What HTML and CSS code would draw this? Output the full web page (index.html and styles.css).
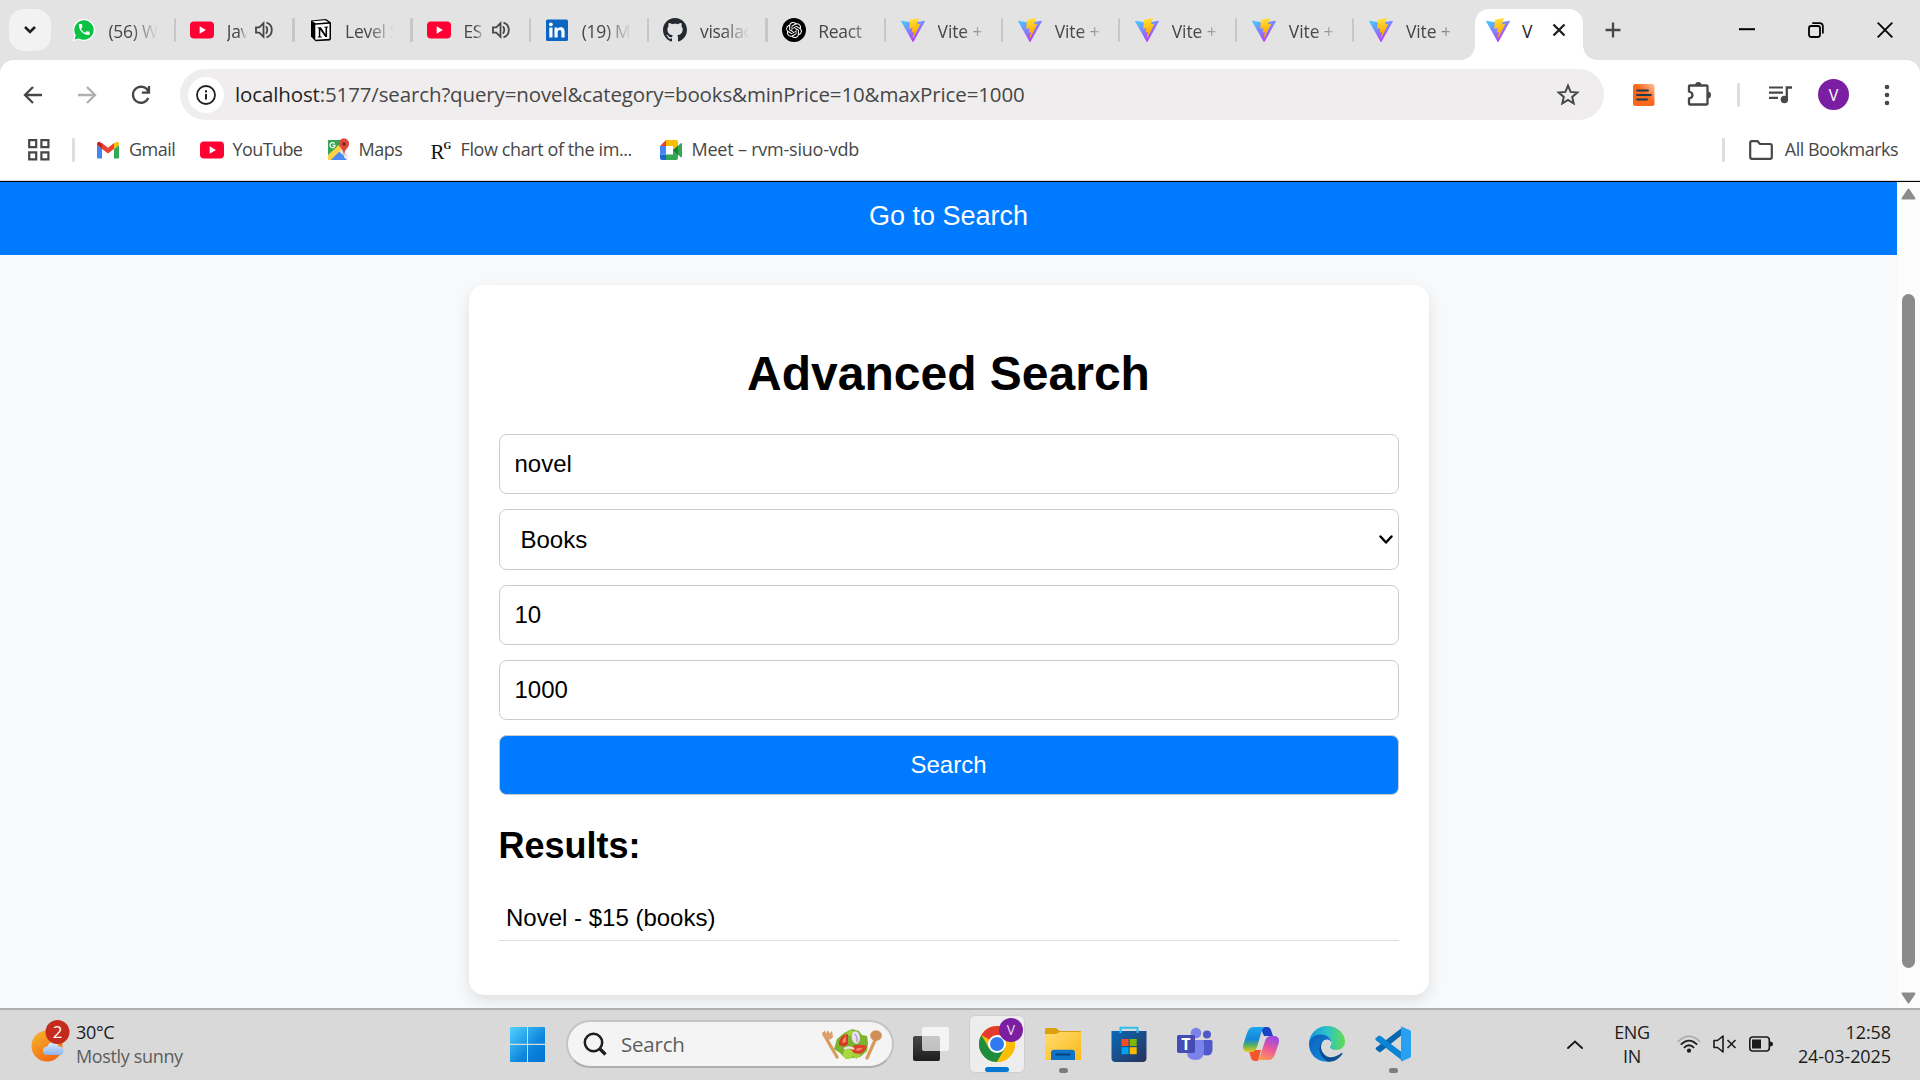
FILE: index.html
```html
<!DOCTYPE html>
<html lang="en">
<head>
<meta charset="utf-8">
<title>Advanced Search</title>
<link rel="stylesheet" href="styles.css">
</head>
<body>
<div class="tabstrip">
  <div class="tab-search"><svg width="14" height="10" viewBox="0 0 14 10"><path d="M2 2l5 5 5-5" fill="none" stroke="#1f1f1f" stroke-width="2.6"/></svg></div>
  <div class="tabs">
    <div class="tab"><svg class="fav" viewBox="0 0 24 24"><path d="M1 23.2L2.6 17.4A11 11 0 1 1 7 21.600z" fill="#fff"/><path d="M2.600 21.600L3.800 17.200A9.700 9.700 0 1 1 7.200 20.400z" fill="#0cc143"/><path transform="translate(5 4.300) scale(.6)" fill="#fff" d="M6.620 10.790c1.440 2.830 3.760 5.140 6.590 6.590l2.200-2.200c.27-.27.67-.36 1.020-.24 1.120.37 2.330.57 3.570.57.550 0 1 .45 1 1V20c0 .550-.45 1-1 1-9.390 0-17-7.610-17-17 0-.550.45-1 1-1h3.500c.550 0 1 .45 1 1 0 1.250.2 2.450.57 3.570.11.350.03.740-.25 1.020l-2.200 2.200z"/></svg><span class="title">(56) W</span><i class="sep"></i></div>
    <div class="tab audible"><svg class="fav"><use href="#yt"/></svg><span class="title">Jav</span><svg class="speaker"><use href="#speaker"/></svg><i class="sep"></i></div>
    <div class="tab"><svg class="fav" viewBox="0 0 24 24"><path d="M2 2.500L17 1l5 3.500V21l-1 1.500L6.500 23.300 2 18.500z" fill="#000"/><path d="M3.500 3.200L16.300 2.200 19.500 4.300 6.600 5.200z" fill="#fff"/><path d="M6.300 6.700L20.500 5.800V20.800L6.300 21.800z" fill="#fff"/><path d="M8.700 9.300h3.200l4.600 7V9.800l-1.300-.3V8.700l4-.2v.8l-1.100.4V19h-1.800L11.300 12v6.300l1.500.4v.7l-4.100.2v-.8l1.100-.4v-8l-1.100-.3z" fill="#000"/></svg><span class="title">Level S</span><i class="sep"></i></div>
    <div class="tab audible"><svg class="fav"><use href="#yt"/></svg><span class="title">ES</span><svg class="speaker"><use href="#speaker"/></svg><i class="sep"></i></div>
    <div class="tab"><svg class="fav" viewBox="0 0 24 24"><rect x="1" y="1.500" width="22" height="21.500" rx="1.500" fill="#0a66c2"/><path d="M4.300 9.500h3.200v10H4.300zM9.500 9.500h3v1.400c.6-1 1.700-1.600 3.200-1.600 3 0 3.900 1.800 3.900 4.700v5.500h-3.200v-5c0-1.500-.3-2.400-1.700-2.400-1.500 0-2 1-2 2.400v5H9.500z" fill="#fff"/><circle cx="5.900" cy="6.300" r="1.900" fill="#fff"/></svg><span class="title">(19) M</span><i class="sep"></i></div>
    <div class="tab"><svg class="fav" viewBox="0 0 16 16"><path fill="#24292f" d="M8 0C3.580 0 0 3.580 0 8c0 3.540 2.290 6.530 5.470 7.590.4.070.550-.17.550-.38 0-.19-.01-.82-.01-1.490-2.010.37-2.530-.49-2.690-.94-.09-.23-.48-.94-.82-1.130-.28-.15-.68-.52-.01-.53.630-.01 1.080.580 1.230.820.720 1.210 1.870.870 2.330.660.070-.52.280-.87.510-1.070-1.780-.2-3.640-.89-3.640-3.950 0-.87.310-1.590.820-2.150-.08-.2-.36-1.020.080-2.120 0 0 .670-.21 2.200.820.640-.18 1.320-.27 2-.27s1.360.090 2 .27c1.530-1.040 2.200-.82 2.200-.82.440 1.100.160 1.920.080 2.120.510.560.820 1.270.820 2.150 0 3.070-1.870 3.750-3.650 3.950.290.250.540.730.540 1.480 0 1.070-.01 1.930-.01 2.200 0 .210.150.460.550.380A8.010 8.010 0 0 0 16 8c0-4.420-3.580-8-8-8z"/></svg><span class="title">visalac</span><i class="sep"></i></div>
    <div class="tab"><svg class="fav" viewBox="0 0 24 24"><circle cx="12" cy="12" r="12"/><path transform="translate(4 4) scale(.667)" fill="#fff" d="M22.2819 9.8211a5.9847 5.9847 0 0 0-.5157-4.9108 6.0462 6.0462 0 0 0-6.5098-2.9A6.0651 6.0651 0 0 0 4.9807 4.1818a5.9847 5.9847 0 0 0-3.9977 2.9 6.0462 6.0462 0 0 0 .7427 7.0966 5.98 5.98 0 0 0 .511 4.9107 6.051 6.051 0 0 0 6.5146 2.9001A5.9847 5.9847 0 0 0 13.2599 24a6.0557 6.0557 0 0 0 5.7718-4.2058 5.9894 5.9894 0 0 0 3.9977-2.9001 6.0557 6.0557 0 0 0-.7475-7.0729zm-9.022 12.6081a4.4755 4.4755 0 0 1-2.8764-1.0408l.1419-.0804 4.7783-2.7582a.7948.7948 0 0 0 .3927-.6813v-6.7369l2.02 1.1686a.071.071 0 0 1 .038.052v5.5826a4.504 4.504 0 0 1-4.4945 4.4944zm-9.6607-4.1254a4.4708 4.4708 0 0 1-.5346-3.0137l.142.0852 4.783 2.7582a.7712.7712 0 0 0 .7806 0l5.8428-3.3685v2.3324a.0804.0804 0 0 1-.0332.0615L9.74 19.9502a4.4992 4.4992 0 0 1-6.1408-1.6464zM2.3408 7.8956a4.485 4.485 0 0 1 2.3655-1.9728V11.6a.7664.7664 0 0 0 .3879.6765l5.8144 3.3543-2.0201 1.1685a.0757.0757 0 0 1-.071 0l-4.8303-2.7865A4.504 4.504 0 0 1 2.3408 7.872zm16.5963 3.8558L13.1038 8.364 15.1192 7.2a.0757.0757 0 0 1 .071 0l4.8303 2.7913a4.4944 4.4944 0 0 1-.6765 8.1042v-5.6772a.79.79 0 0 0-.407-.667zm2.0107-3.0231l-.142-.0852-4.7735-2.7818a.7759.7759 0 0 0-.7854 0L9.409 9.2297V6.8974a.0662.0662 0 0 1 .0284-.0615l4.8303-2.7866a4.4992 4.4992 0 0 1 6.6802 4.66zM8.3065 12.863l-2.02-1.1638a.0804.0804 0 0 1-.038-.0567V6.0742a4.4992 4.4992 0 0 1 7.3757-3.4537l-.142.0805L8.704 5.459a.7948.7948 0 0 0-.3927.6813zm1.0976-2.3654l2.602-1.4998 2.6069 1.4998v2.9994l-2.5974 1.4997-2.6067-1.4997Z"/></svg><span class="title react">React</span><i class="sep"></i></div>
    <div class="tab narrow"><svg class="fav"><use href="#vite"/></svg><span class="title">Vite +</span><i class="sep"></i></div>
    <div class="tab narrow"><svg class="fav"><use href="#vite"/></svg><span class="title">Vite +</span><i class="sep"></i></div>
    <div class="tab narrow"><svg class="fav"><use href="#vite"/></svg><span class="title">Vite +</span><i class="sep"></i></div>
    <div class="tab narrow"><svg class="fav"><use href="#vite"/></svg><span class="title">Vite +</span><i class="sep"></i></div>
    <div class="tab narrow"><svg class="fav"><use href="#vite"/></svg><span class="title">Vite +</span></div>
    <div class="tab active"><svg class="fav"><use href="#vite"/></svg><span class="title">V</span><svg width="14" height="14" viewBox="0 0 14 14"><path d="M1.500 1.500l11 11M12.500 1.500l-11 11" stroke="#1f1f1f" stroke-width="2.300"/></svg></div>
    <svg class="newtab" width="16" height="16" viewBox="0 0 16 16"><path d="M8 .5v15M.5 8h15" stroke="#474747" stroke-width="2.300"/></svg>
  </div>
  <div class="controls">
    <span><svg width="16" height="16" viewBox="0 0 16 16"><path d="M0 7.200h16" stroke="#000" stroke-width="2"/></svg></span>
    <span><svg width="16" height="16" viewBox="0 0 16 16"><rect x="1" y="4" width="11" height="11" rx="2.200" fill="none" stroke="#000" stroke-width="1.800"/><path d="M4.300 1.200H11.500Q14.900 1.200 14.900 4.600V11.500" fill="none" stroke="#000" stroke-width="1.700"/></svg></span>
    <span><svg width="16" height="16" viewBox="0 0 16 16"><path d="M.7.700l14.600 14.600M15.300.700L.7 15.300" stroke="#000" stroke-width="1.800"/></svg></span>
  </div>
</div>

<div class="chrome">
  <div class="toolbar">
    <svg class="nav" viewBox="0 0 24 24"><path d="M21 12H5M12 4l-8 8 8 8" fill="none" stroke="#474747" stroke-width="2.300"/></svg>
    <svg class="nav" viewBox="0 0 24 24"><path d="M3 12h16M12 4l8 8-8 8" fill="none" stroke="#b0b0b0" stroke-width="2.300"/></svg>
    <svg class="nav" viewBox="0 0 24 24"><path d="M19.300 15A8 8 0 1 1 19.300 8.500M12.800 9.700H20V3" fill="none" stroke="#474747" stroke-width="2.300"/></svg>
    <div class="omnibox">
      <span class="info"><svg width="20" height="20" viewBox="0 0 20 20"><circle cx="10" cy="10" r="9" fill="none" stroke="#1f1f1f" stroke-width="1.800"/><path d="M10 9v5.500M10 5.200v2.200" stroke="#1f1f1f" stroke-width="2"/></svg></span>
      <span class="url"><b>localhost</b>:5177/search?query=novel&amp;category=books&amp;minPrice=10&amp;maxPrice=1000</span>
      <svg class="star" viewBox="0 0 24 24"><path d="M12 2.700l2.600 6.200 6.700.6-5.100 4.400 1.500 6.600-5.700-3.500-5.700 3.500 1.500-6.600L2.700 9.500l6.700-.6z" fill="none" stroke="#474747" stroke-width="2"/></svg>
    </div>
    <svg class="ext" viewBox="0 0 22 22"><defs><linearGradient id="og" x1="0" y1="1" x2="1" y2="0"><stop offset=".55" stop-color="#f9681c"/><stop offset="1" stop-color="#fcc3a4"/></linearGradient></defs><rect width="21.500" height="22" rx="2.500" fill="url(#og)"/><path d="M4 6.500h11M4 11h14M4 15.500h10" stroke="#1d3c52" stroke-width="1.800" stroke-linecap="round"/></svg>
    <svg class="puzzle" viewBox="0 0 26 26"><path d="M3 4.500h16.500q1 0 1 1v17q0 1-1 1H3q-1 0-1-1V17.500q3.500-.8 3.500-3.500T2 10.500v-5q0-1 1-1z" fill="none" stroke="#474747" stroke-width="2.300"/><path d="M8 4.500a3.300 3.500 0 0 1 6.600 0zM20.500 10.600a3.500 3.400 0 0 1 0 6.800z" fill="#474747"/></svg>
    <i class="bar"></i>
    <svg class="media" viewBox="0 0 24 20"><path d="M0 2.500h14M0 7.700h14M0 12.900h9" stroke="#474747" stroke-width="2.200"/><path d="M17.800 14V2.500H23" fill="none" stroke="#474747" stroke-width="2.300"/><circle cx="15.400" cy="14.500" r="3.700" fill="#474747"/></svg>
    <span class="avatar">V</span>
    <svg class="dots" viewBox="0 0 6 22"><circle cx="3" cy="3" r="2.300"/><circle cx="3" cy="11" r="2.300"/><circle cx="3" cy="19" r="2.300"/></svg>
  </div>
  <div class="bookmarks">
    <svg class="apps" viewBox="0 0 22 22"><path d="M1.200 1.200h7v7h-7zM13.400 1.200h7v7h-7zM1.200 13.400h7v7h-7zM13.400 13.400h7v7h-7z" fill="none" stroke="#474747" stroke-width="2.200"/></svg>
    <i class="bar"></i>
    <div class="bm gmail"><svg viewBox="0 0 24 24"><path d="M1 20V7l5 4v9.500H2.500Q1 20.500 1 20z" fill="#4285f4"/><path d="M23 20V7l-5 4v9.500h3.500q1.500 0 1.500-.5z" fill="#34a853"/><path d="M1 7V6q0-2.500 2.500-2.300L6 5.500V11z" fill="#c5221f"/><path d="M23 7V6q0-2.500-2.500-2.300L18 5.500V11z" fill="#fbbc04"/><path d="M6 5l6 4.700L18 5v6l-6 4.500L6 11z" fill="#ea4335"/></svg><span>Gmail</span></div>
    <div class="bm youtube"><svg><use href="#yt"/></svg><span>YouTube</span></div>
    <div class="bm maps"><svg viewBox="0 0 24 24"><path d="M2 2h16v20H2z" fill="#34a853"/><path d="M2 22L18 6v16z" fill="#4c8bf5"/><path d="M2 17L17 3l4 4L5 22H2z" fill="#fdd247"/><path d="M5 22l8-8 8 8z" fill="#4c8bf5"/><path d="M13 13.500l2.500-2.500 6 6V21z" fill="#e4e4e4"/><path d="M18 18q-.5-6-3.500-8.500A5.200 5.200 0 1 1 23 6.200q0 2-1.500 3.500Q18.500 12 18 18z" fill="#dd4b3e"/><circle cx="18" cy="6" r="1.800" fill="#7b231e"/><path d="M8.500 5.700A2.500 2.500 0 1 0 9 7.400H6.700" fill="none" stroke="#fff" stroke-width="1.200"/></svg><span>Maps</span></div>
    <div class="bm flow"><span class="rg">R<sup>G</sup></span><span>Flow chart of the im...</span></div>
    <div class="bm meet"><svg viewBox="0 0 24 24"><path d="M1 8l6-6v6z" fill="#ea4335"/><path d="M1 8h6v8.500H1z" fill="#4285f4"/><path d="M1 16.500h6V22H3q-2 0-2-2z" fill="#1967d2"/><path d="M7 2h10q2 0 2 2v6l-5 3V8H7z" fill="#fbbc04"/><path d="M7 16.500h7V11l5 3v6q0 2-2 2H7z" fill="#34a853"/><path d="M14 12.200L21.500 5.500Q23 4.500 23 6v12.500q0 1.500-1.500.5z" fill="#34a853"/><path d="M14 12.200l5-4.500v9z" fill="#188038"/></svg><span>Meet – rvm-siuo-vdb</span></div>
    <i class="bar last"></i>
    <div class="bm all"><svg viewBox="0 0 24 24"><path d="M1.200 19V5q0-1.800 1.800-1.800h5.500L11 6h10q1.800 0 1.800 1.800V19q0 1.800-1.800 1.800H3Q1.200 20.800 1.200 19z" fill="none" stroke="#474747" stroke-width="2.200"/></svg><span>All Bookmarks</span></div>
  </div>
</div>

<div class="viewport">
  <main class="page">
    <header class="site-header"><a>Go to Search</a></header>
    <section class="card">
      <h1>Advanced Search</h1>
      <form class="fields">
        <div class="field">novel</div>
        <div class="field select">Books<svg width="14" height="10" viewBox="0 0 14 10"><path d="M1.500 1.500L7 7.500l5.500-6" fill="none" stroke="#000" stroke-width="2.400" stroke-linecap="round" stroke-linejoin="round"/></svg></div>
        <div class="field">10</div>
        <div class="field">1000</div>
        <div class="field submit">Search</div>
      </form>
      <h2>Results:</h2>
      <ul class="results"><li>Novel - $15 (books)</li></ul>
    </section>
  </main>
  <div class="scrollbar">
    <svg width="15" height="12" viewBox="0 0 15 12"><path d="M7.500 1.500L13.500 10.500h-12z" fill="#8b8b8b" stroke="#8b8b8b" stroke-width="2" stroke-linejoin="round"/></svg>
    <div class="thumb"></div>
    <svg width="15" height="12" viewBox="0 0 15 12"><path d="M7.500 10.500L13.500 1.500h-12z" fill="#8b8b8b" stroke="#8b8b8b" stroke-width="2" stroke-linejoin="round"/></svg>
  </div>
</div>

<div class="taskbar">
  <div class="weather">
    <svg width="40" height="44" viewBox="0 0 40 44"><defs><linearGradient id="sun" x1="0" y1="0" x2=".6" y2="1"><stop stop-color="#f5b82e"/><stop offset="1" stop-color="#f26a12"/></linearGradient><linearGradient id="cl" x1="0" y1="0" x2="0" y2="1"><stop stop-color="#dce9fb"/><stop offset="1" stop-color="#8db4ec"/></linearGradient></defs><circle cx="17" cy="27" r="15.500" fill="url(#sun)"/><path d="M17 36a4.300 4.300 0 0 1 .3-8.600 6 6 0 0 1 11.400 0A4.300 4.300 0 0 1 30 36z" fill="url(#cl)"/><circle cx="27.500" cy="13" r="12" fill="#c42b1c"/><text x="27.500" y="19" text-anchor="middle" class="badge">2</text></svg>
    <div class="wtext"><span>30°C</span><span class="muted">Mostly sunny</span></div>
  </div>
  <div class="dock">
    <svg class="start" viewBox="0 0 35 35"><defs><linearGradient id="win" x1="0" y1="0" x2="1" y2="1"><stop stop-color="#4fd3ff"/><stop offset=".6" stop-color="#0f86de"/><stop offset="1" stop-color="#0072d0"/></linearGradient></defs><path d="M1 0h16v16.800H0V1q0-1 1-1zM18 0h16q1 0 1 1v15.800H18zM0 18h17v17H1q-1 0-1-1zM18 18h17v16q0 1-1 1H18z" fill="url(#win)"/></svg>
    <div class="tsearch">
      <svg width="24" height="24" viewBox="0 0 24 24"><circle cx="10.500" cy="10.500" r="8.700" fill="none" stroke="#1e1e1e" stroke-width="2.500"/><path d="M17 17l5.500 5.500" stroke="#1e1e1e" stroke-width="3.200"/></svg>
      <span>Search</span>
      <svg class="salad" viewBox="0 0 62 32"><path d="M5 10l11 19M55 10L46 30" stroke="#d99a5b" stroke-width="3.200" stroke-linecap="round"/><path d="M1 5l3-2.500 1.200 3L7 2l1.500 3.500L11 3l1 6q-2 3.500-6 2.500Q1.500 9.500 1 5z" fill="#dca06a"/><ellipse cx="55" cy="7.500" rx="5.800" ry="5.300" fill="#cf9058"/><path d="M13 21l3-10 7-6 8-4 7 2 3 4 5 1 1 7-1 8-7 6-8 1-6 1-6-6z" fill="#7cb22c"/><path d="M23 7l7-5 5 2-2 4zM27 23l7-2 6 7-5 3z" fill="#a6d13a"/><path d="M18 17q0-10 9-11v10q-3 4-9 1z" fill="#d93a25"/><path d="M30 22q0-6 12-5l4 1q-3 10-13 7z" fill="#dc3f28"/><path d="M21 15q1-5 4-7v6zM34 22q3-3 8-2-3 4-8 2z" fill="#f3876b"/><path d="M32 4q6-3 7 6 0 5-4 6-7-4-3-12z" fill="#eadff0"/><path d="M34 6q3 3 2 8" fill="none" stroke="#a77bb5"/><circle cx="27" cy="26" r="5" fill="#aad83f"/><path d="M23 21q5-3 10 0" stroke="#f2dfe0" stroke-width="2.500" fill="none"/></svg>
    </div>
    <svg class="tview" viewBox="0 0 36 35"><defs><linearGradient id="tv" x1="0" y1="0" x2="0" y2="1"><stop stop-color="#484848"/><stop offset="1" stop-color="#1d1d1d"/></linearGradient></defs><rect y="9" width="27" height="25" rx="2" fill="url(#tv)"/><rect x="9" width="27" height="24" rx="2" fill="#fff" opacity=".7"/></svg>
    <div class="app current"><svg viewBox="0 0 36 36"><circle cx="18" cy="18" r="18" fill="#fbbc04"/><path d="M18 18L2.400 9A18 18 0 0 1 33.600 9H18z" fill="#e33b2e"/><path d="M18 18l7.800 4.500L18 36A18 18 0 0 1 2.400 9l7.800 13.500z" fill="#1e8e3e"/><path d="M18 9h15.600A18 18 0 0 1 18 36l7.800-13.500z" fill="#fbbc04"/><circle cx="18" cy="18" r="9" fill="#fff"/><circle cx="18" cy="18" r="7" fill="#3079ee"/></svg><span class="profile">V</span><i class="run on"></i></div>
    <div class="app"><svg viewBox="0 0 36 36"><defs><linearGradient id="fo" x1="0" y1="0" x2="1" y2="1"><stop stop-color="#ffdc73"/><stop offset="1" stop-color="#fbb917"/></linearGradient></defs><path d="M0 3.500Q0 2 1.500 2H10q1.500 0 2.500 1.200L14.500 5H35q1 0 1 1v8H0z" fill="#dd9f0a"/><path d="M0 8h10.500q1.500 0 2.500-1t2.500-1H35q1 0 1 1v26q0 1-1 1H1q-1 0-1-1z" fill="url(#fo)"/><path d="M6 34V27q0-3.300 3.300-3.300H27q3 0 3 3V34z" fill="#0f73c8"/><path d="M10.500 28.500h15" stroke="#08457e" stroke-width="2"/></svg><i class="run"></i></div>
    <div class="app"><svg viewBox="0 0 36 36"><defs><linearGradient id="st" x1="0" y1="0" x2="1" y2="1"><stop stop-color="#0a6ab8"/><stop offset="1" stop-color="#2a3158"/></linearGradient></defs><path d="M.5 5h35v27q0 4-4 4h-27q-4 0-4-4z" fill="url(#st)"/><path d="M9.500 7V1.800h17V7" fill="none" stroke="#30bdf0" stroke-width="2"/><path d="M10.500 13h7v7h-7z" fill="#f25022"/><path d="M18.700 13h7v7h-7z" fill="#7fba00"/><path d="M10.500 21.200h7v7h-7z" fill="#00a4ef"/><path d="M18.700 21.200h7v7h-7z" fill="#ffb900"/></svg></div>
    <div class="app"><svg viewBox="0 0 36 36"><circle cx="19" cy="7" r="5.300" fill="#7b83eb"/><circle cx="30" cy="8.500" r="4" fill="#5059c9"/><path d="M23 14h11q1.500 0 1.500 1.500v8q0 6-6 6-4 0-6.500-3z" fill="#5059c9"/><path d="M11 14h14.500q1.500 0 1.500 1.500V25q0 9-8.500 9T10 26z" fill="#7b83eb"/><rect y="9" width="18" height="18" rx="1.800" fill="#454db5"/><text x="9" y="23.500" text-anchor="middle" class="tee">T</text></svg></div>
    <div class="app"><svg viewBox="0 0 36 36"><defs><linearGradient id="c1" x1="0" y1="0" x2="0" y2="1"><stop stop-color="#1fa8ee"/><stop offset=".5" stop-color="#1387d8"/><stop offset=".75" stop-color="#5fb35a"/><stop offset="1" stop-color="#f1c81c"/></linearGradient><linearGradient id="c2" x1=".3" y1="0" x2="0" y2="1"><stop stop-color="#a34be0"/><stop offset=".45" stop-color="#ee5a94"/><stop offset="1" stop-color="#ffa24e"/></linearGradient></defs><path d="M17 1h7q3 0 4 3l2 6h-9z" fill="#1b44c4"/><path d="M10 24h8l-3 11h-3q-3 0-4-3L6 25z" fill="#f4552c"/><path d="M10 1h12q-2.500 1-3.500 5L14 21q-1.500 5-6 5H5Q-1.500 26 .5 18L4 7q2-6 6-6z" fill="url(#c1)"/><path d="M26 34H14q2.500-1 3.500-5L22 15q1.500-5 6-5h3q6.500 0 4.500 8L32 28q-2 6-6 6z" fill="url(#c2)"/></svg></div>
    <div class="app"><svg viewBox="0 0 36 36"><defs><linearGradient id="e1" x1="0" y1=".5" x2="1" y2=".5"><stop stop-color="#1594d8"/><stop offset=".5" stop-color="#2cc3c8"/><stop offset="1" stop-color="#62dc50"/></linearGradient><linearGradient id="e2" x1="0" y1="0" x2=".7" y2="1"><stop stop-color="#0c5fb5"/><stop offset="1" stop-color="#1387e0"/></linearGradient></defs><path d="M0 18A18 18 0 0 1 18 0C29 0 36 8 36 15.500c0 5.500-4 8.500-9 8.500-4 0-6-1.500-6-3 0-1 1.500-1.700 1.500-4.500C22.500 12 18 9 12 9 6 9 1 13 0 18z" fill="url(#e1)"/><path d="M0 18c0-5 5-9.500 11.500-9.500 6.500 0 10.500 3.500 11 8-1-2-2.500-3-4.500-3-4 0-6.500 4-6 9 .5 6 5 11 10.500 12.500C10 38.500 0 29 0 18z" fill="url(#e2)"/><path d="M14 15c-2.500 3-3 8 .5 12.500S24 33 32.500 27c1-.7 1.300.3.800 1C28 36 20 37 17 34.500 10 30 8 20 14 15z" fill="#0c4f93"/></svg></div>
    <div class="app"><svg viewBox="0 0 36 36"><path d="M1 12.500l3-2.500q1-.6 2 .2L28 28v7L1.200 14.500Q0 13.500 1 12.500z" fill="#0a7fd0"/><path d="M1 23.500l3 2.500q1 .6 2-.2L28 8V1L1.200 21.500Q0 22.500 1 23.500z" fill="#0668ae"/><path d="M0 12.700l4-3.200L28 27v8z" fill="#0d84d4"/><path d="M26.500.500L35 4.200q1 .6 1 1.800V30q0 1.200-1 1.800L26.500 35.500 26 35V1z" fill="#29a0f0"/></svg><i class="run"></i></div>
  </div>
  <div class="tray">
    <svg class="chev" viewBox="0 0 16 9"><path d="M1 8l7-6.500L15 8" fill="none" stroke="#1b1b1b" stroke-width="1.900" stroke-linecap="round"/></svg>
    <div class="lang"><span>ENG</span><span>IN</span></div>
    <svg class="wifi" viewBox="0 0 24 18"><path d="M.8 7q11.200-11.500 22.400 0" fill="none" stroke="#a9a9a9" stroke-width="1.500"/><path d="M3.800 9.700q8.200-8.200 16.400 0M6.900 12.800q5.100-5 10.200 0" fill="none" stroke="#1b1b1b" stroke-width="1.800"/><circle cx="12" cy="15.700" r="2.100" fill="#1b1b1b"/></svg>
    <svg class="vol" viewBox="0 0 24 18"><path d="M1 5.500h3.500L10 1v16L4.500 12.500H1z" fill="none" stroke="#1b1b1b" stroke-width="1.600" stroke-linejoin="round"/><path d="M14.500 5l8 8M22.500 5l-8 8" stroke="#1b1b1b" stroke-width="1.600"/></svg>
    <svg class="bat" viewBox="0 0 24 16"><rect x=".8" y="1" width="19.500" height="14" rx="3" fill="none" stroke="#1b1b1b" stroke-width="1.600"/><path d="M3 3.500h9v9H3zM21 5.500q3 0 3 2.500t-3 2.500z" fill="#1b1b1b"/></svg>
    <div class="clock"><span>12:58</span><span>24-03-2025</span></div>
  </div>
</div>

<svg class="sprite">
  <defs>
    <linearGradient id="va" x1="0" x2=".6" y1="0" y2="1"><stop stop-color="#41d1ff"/><stop offset="1" stop-color="#bd34fe"/></linearGradient>
    <linearGradient id="vb" x1=".4" x2=".5" y1="0" y2=".8"><stop stop-color="#ffea83"/><stop offset=".1" stop-color="#ffdd35"/><stop offset="1" stop-color="#ffa800"/></linearGradient>
  </defs>
  <symbol id="vite" viewBox="0 0 256 257"><path fill="url(#va)" d="M255.153 37.938L134.897 252.976c-2.483 4.440-8.862 4.466-11.382.048L.875 37.958c-2.746-4.814 1.371-10.646 6.827-9.670l120.385 21.517a6.537 6.537 0 0 0 2.322-.004l117.867-21.483c5.438-.991 9.574 4.796 6.877 9.620Z"/><path fill="url(#vb)" d="M185.432.063L96.440 17.501a3.268 3.268 0 0 0-2.634 3.014l-5.474 92.456a3.268 3.268 0 0 0 3.997 3.378l24.777-5.718c2.318-.535 4.413 1.507 3.936 3.838l-7.361 36.047c-.495 2.426 1.782 4.500 4.151 3.780l15.304-4.649c2.372-.72 4.652 1.360 4.150 3.788l-11.698 56.621c-.732 3.542 3.979 5.473 5.943 2.437l1.313-2.028l72.516-144.720c1.215-2.423-.88-5.186-3.540-4.672l-25.505 4.922c-2.396.462-4.435-1.770-3.759-4.114l16.646-57.705c.677-2.350-1.370-4.583-3.769-4.113Z"/></symbol>
  <symbol id="yt" viewBox="0 0 24 24"><rect y="3.500" width="24" height="17" rx="4" fill="#ff0033"/><path d="M9.700 8.300l6.200 3.700-6.200 3.700z" fill="#fff"/></symbol>
  <symbol id="speaker" viewBox="0 0 18 18"><path d="M1 6.300h3.300L8.500 2.200v13.600L4.300 11.700H1z" fill="none" stroke="#474747" stroke-width="1.800"/><path d="M11 5.300q2.500 3.700 0 7.400M11.500 1.700q5.300 1.600 5.300 7.300t-5.300 7.300" fill="none" stroke="#474747" stroke-width="1.800"/></symbol>
</svg>
</body>
</html>
```
FILE: styles.css
```css
* { box-sizing: border-box; }
body { margin: 0; width: 1920px; height: 1080px; overflow: hidden; display: flex; flex-direction: column; background: #fff; font-family: "Open Sans", "Noto Sans", sans-serif; font-size: 18px; color: #474747; white-space: nowrap; }
svg { display: block; flex: none; }
i { flex: none; }
.sprite { width: 0; height: 0; }

/* tab strip */
.tabstrip { height: 60px; flex: none; display: flex; background: #e3e3e3; padding-left: 9px; }
.tab-search { width: 42px; height: 42px; margin-top: 9px; border-radius: 15px; background: #f2f2f2; display: flex; align-items: center; justify-content: center; }
.tabs { display: flex; margin-left: 7px; flex: 1; align-items: center; }
.tab { width: 118.3px; height: 100%; display: flex; align-items: center; padding-left: 14px; }
.tab.narrow { width: 117.1px; padding-left: 15px; }
.fav { width: 24px; height: 24px; }
.title { flex: 1; min-width: 0; overflow: hidden; margin: 0 16px 0 12.5px; font-size: 17.5px; letter-spacing: -.3px; padding-top: 1px; -webkit-mask-image: linear-gradient(90deg, #000 calc(100% - 26px), transparent); mask-image: linear-gradient(90deg, #000 calc(100% - 26px), transparent); }
.narrow .title { margin-right: 12px; letter-spacing: -.1px; }
.react { -webkit-mask-image: linear-gradient(90deg, #000 55%, #0009 88%); mask-image: linear-gradient(90deg, #000 55%, #0009 88%); }
.audible .title { margin-right: 8px; -webkit-mask-image: linear-gradient(90deg, #000 60%, transparent); mask-image: linear-gradient(90deg, #000 60%, transparent); }
.speaker { width: 18px; height: 18px; margin-right: 19px; }
.sep { width: 2.5px; height: 24px; background: #c7c7c7; border-radius: 1px; }
.tab.active { position: relative; width: 108px; height: 51px; margin: 9px 0 0 3px; padding: 0 17px 9px 11px; background: #fff; border-radius: 14px 14px 0 0; color: #1f1f1f; }
.tab.active::before, .tab.active::after { content: ""; position: absolute; bottom: 0; width: 14px; height: 14px; }
.tab.active::before { left: -14px; background: radial-gradient(circle at 0 0, transparent 13.5px, #fff 14px); }
.tab.active::after { right: -14px; background: radial-gradient(circle at 100% 0, transparent 13.5px, #fff 14px); }
.active .title { -webkit-mask-image: none; mask-image: none; margin-right: 0; }
.newtab { margin-left: 22px; }
.controls { display: flex; width: 207px; }
.controls span { flex: 1; display: flex; align-items: center; justify-content: center; padding-right: 1px; }

/* toolbar and bookmarks */
.chrome { height: 122px; flex: none; background: linear-gradient(#e3e3e3, #e3e3e3) 0 0/100% 14px no-repeat; border-bottom: 1px solid #000; display: flex; flex-direction: column; }
.toolbar { height: 60px; padding: 9px 30px 0 21px; display: flex; background: #fff; border-radius: 14px 14px 0 0; align-items: center; }
.nav { width: 24px; height: 24px; margin-right: 30px; }
.nav:nth-child(3) { margin-right: 27px; }
.omnibox { width: 1425px; height: 51px; border-radius: 26px; background: #efedee; display: flex; align-items: center; padding: 0 24px 0 8px; }
.info { width: 36px; height: 36px; border-radius: 50%; background: #fff; display: flex; align-items: center; justify-content: center; }
.url { flex: 1; margin-left: 11px; font-size: 20.5px; letter-spacing: -.13px; padding-bottom: 2px; }
.url b { font-weight: 400; color: #1f1f1f; }
.star { width: 24px; height: 24px; }
.ext { width: 22px; height: 22px; margin-left: 29px; }
.puzzle { width: 26px; height: 26px; margin: 0 24px 2px 32px; }
.bar { width: 3px; height: 24px; background: #dedede; border-radius: 1px; }
.media { width: 24px; height: 20px; margin: 0 25px 0 29px; }
.avatar { width: 31px; height: 31px; border-radius: 50%; background: #7b1fa2; color: #fff; font-size: 16px; display: flex; align-items: center; justify-content: center; }
.dots { width: 6px; height: 22px; margin-left: 35px; fill: #474747; }
.bookmarks { height: 60px; padding: 0 22px 0 28px; display: flex; align-items: center; border-bottom: 1px solid #ddd; background: #fff; letter-spacing: -.3px; flex: 1; }
.apps { width: 22px; height: 22px; margin-right: 22px; }
.bm { display: flex; align-items: center; gap: 9px; }
.bm > span { padding-bottom: 2px; }
.bm svg { width: 24px; height: 24px; }
.gmail { margin-left: 21px; width: 103.500px; letter-spacing: -.5px; }
.youtube { width: 126px; letter-spacing: -.6px; }
.maps { width: 105px; letter-spacing: -.5px; }
.flow { width: 228px; gap: 8px; letter-spacing: -.4px; }
.meet { letter-spacing: -.22px; }
.bm .rg { width: 22px; font: 21px "Liberation Serif", serif; color: #111; letter-spacing: -1px; padding: 4px 0 0; }
.rg sup { font-size: 10px; font-weight: 700; line-height: 0; vertical-align: 10px; }
.last { margin-left: auto; }
.all { margin-left: 24px; gap: 12px; letter-spacing: -.52px; }

/* web page */
.viewport { height: 826px; flex: none; display: flex; overflow: hidden; font-family: "Liberation Sans", Arial, sans-serif; color: #000; }
.page { flex: 1; background: #f8f9fb; }
.site-header { height: 73px; background: #007bff; color: #fff; text-align: center; font-size: 27px; line-height: 31px; padding-top: 19px; }
.card { width: 960px; height: 710px; margin: 30px auto 0; padding: 30px; background: #fff; border-radius: 15px; box-shadow: 0 6px 15px rgba(0,0,0,.1); }
h1 { margin: 31px 0 33px; font-size: 48px; line-height: 55px; text-align: center; }
.fields { display: flex; flex-direction: column; gap: 15px; }
.field { height: 60px; border: 1px solid #ccc; border-radius: 7.5px; padding: 0 15px; font-size: 24px; display: flex; align-items: center; }
.select { height: 61px; padding: 0 5px 0 21px; justify-content: space-between; }
.submit { background: #007bff; color: #fff; justify-content: center; }
h2 { margin: 30px 0; font-size: 36px; line-height: 41px; }
.results { margin: 0; padding: 0; list-style: none; }
.results li { padding: 8px 7.5px; font-size: 24px; line-height: 28px; border-bottom: 1px solid #ddd; }
.scrollbar { width: 23px; background: #fcfcfc; display: flex; flex-direction: column; align-items: center; padding: 6px 0 4px; }
.thumb { width: 13px; height: 674px; margin: 94px 0 auto; border-radius: 7px; background: #8b8b8b; }

/* taskbar */
.taskbar { height: 72px; flex: none; border-top: 2px solid #b0b0b0; background: #d9d9d9; display: flex; align-items: center; color: #1b1b1b; padding-bottom: 2px; }
.weather { width: 510px; display: flex; padding-left: 30px; gap: 6px; align-items: center; }
.weather svg { margin-bottom: 6px; }
.wtext, .lang, .clock { display: flex; flex-direction: column; line-height: 24px; letter-spacing: -.35px; padding-bottom: 1px; }
.muted { color: #5d5d5d; }
.badge { font-size: 17px; fill: #fff; }
.dock { display: flex; align-items: center; }
.start { width: 35px; height: 35px; }
.tsearch { width: 328px; height: 48px; margin: 0 19px 0 21px; border: 2px solid #c4c4c4; border-bottom-color: #aeaeae; border-radius: 24px; background: #f4f4f4; display: flex; align-items: center; padding: 0 9px 0 15px; font-size: 20.5px; color: #5d5d5d; }
.tsearch span { flex: 1; margin-left: 14px; letter-spacing: -.2px; }
.salad { width: 62px; height: 32px; }
.tview { width: 36px; height: 35px; margin-right: 15px; }
.app { position: relative; width: 56px; height: 58px; margin: 0 5px; display: flex; align-items: center; justify-content: center; border-radius: 6px; }
.app svg { width: 36px; height: 36px; }
.current { background: #ededed; border: 1px solid #cfcfcf; }
.run { position: absolute; bottom: 0; left: 50%; width: 9px; height: 5px; margin-left: -4px; border-radius: 3px; background: #7c7c7c; }
.run.on { width: 24px; margin-left: -12px; background: #0078d4; }
.profile { position: absolute; left: 29px; top: 2px; width: 24px; height: 24px; border-radius: 50%; background: #7b1fa2; color: #e9d7f1; font-size: 14px; line-height: 24px; text-align: center; }
.tee { font-size: 16px; font-weight: 700; fill: #fff; }
.tray { margin-left: auto; padding-right: 29px; display: flex; align-items: center; }
.chev { width: 16px; height: 9px; margin-right: 31px; }
.lang { width: 36px; align-items: center; margin-right: 27px; }
.wifi { width: 24px; height: 18px; margin-right: 12px; }
.vol { width: 24px; height: 18px; margin-right: 12px; }
.bat { width: 24px; height: 16px; }
.clock { width: 118px; align-items: flex-end; letter-spacing: -.08px; }
```
